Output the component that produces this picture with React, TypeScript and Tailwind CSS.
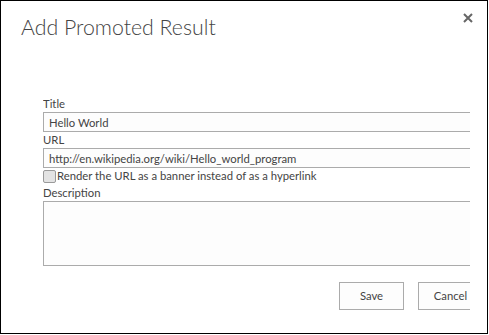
// App.tsx – "Add Promoted Result" dialog

import React, { useState } from "react";

const bodyFont = { fontFamily: '"Lato", "Liberation Sans", sans-serif' };

function Field({
  label,
  children,
}: {
  label: string;
  children: React.ReactNode;
}) {
  return (
    <div>
      <div className="h-[16px] text-[11.3px] leading-[16px] text-[#444]">{label}</div>
      {children}
    </div>
  );
}

export default function App() {
  const [title, setTitle] = useState("Hello World");
  const [url, setUrl] = useState("http://en.wikipedia.org/wiki/Hello_world_program");
  const [banner, setBanner] = useState(false);
  const [description, setDescription] = useState("");

  return (
    <div
      className="relative h-[334px] w-[488px] border border-black bg-white"
      style={bodyFont}
    >
      <h1 className="pl-[20px] pt-[14px] text-[21.3px] font-light leading-[25px] text-[#444]">
        Add Promoted Result
      </h1>

      <button className="absolute right-[13px] top-[11px] flex h-[12px] w-[12px] items-center justify-center">
        <svg width="10" height="10" viewBox="0 0 10 10">
          <path d="M1 1 L9 9 M9 1 L1 9" stroke="#666" strokeWidth="2" />
        </svg>
      </button>

      {/* formuläret klipps vid högerkanten precis som i originalet */}
      <div className="ml-[42px] mt-[56px] w-[427px] overflow-hidden">
        <div className="w-[440px]">
          <Field label="Title">
            <input
              value={title}
              onChange={(e) => setTitle(e.target.value)}
              className="block h-[20px] w-full border border-[#ababab] bg-[#fdfdfd] px-[5px] text-[11.3px] text-[#444] outline-none"
            />
          </Field>
          <Field label="URL">
            <input
              value={url}
              onChange={(e) => setUrl(e.target.value)}
              className="block h-[20px] w-full border border-[#ababab] bg-[#fdfdfd] px-[5px] text-[11.3px] text-[#444] outline-none"
            />
          </Field>

          <label className="flex h-[17px] cursor-pointer items-center text-[11.3px] text-[#444]">
            <span
              onClick={() => setBanner((b) => !b)}
              className="mr-px h-[13px] w-[13px] rounded-[2px] border border-[#9a9a9a] bg-[#e3e3e3]"
            >
              {banner && <span className="block text-center text-[10px] leading-[11px]">✓</span>}
            </span>
            Render the URL as a banner instead of as a hyperlink
          </label>

          <Field label="Description">
            <textarea
              value={description}
              onChange={(e) => setDescription(e.target.value)}
              className="block h-[65px] w-full resize-none border border-[#ababab] bg-[#fdfdfd] px-[5px] text-[11.3px] text-[#444] outline-none"
            />
          </Field>

          <div className="mt-[16px] flex justify-end gap-[14px]">
            <button className="h-[28px] w-[65px] border border-[#ababab] bg-[#fdfdfd] text-[11.3px] text-[#444]">
              Save
            </button>
            <button className="h-[28px] w-[65px] border border-[#ababab] bg-[#fdfdfd] text-[11.3px] text-[#444]">
              Cancel
            </button>
          </div>
        </div>
      </div>
    </div>
  );
}
